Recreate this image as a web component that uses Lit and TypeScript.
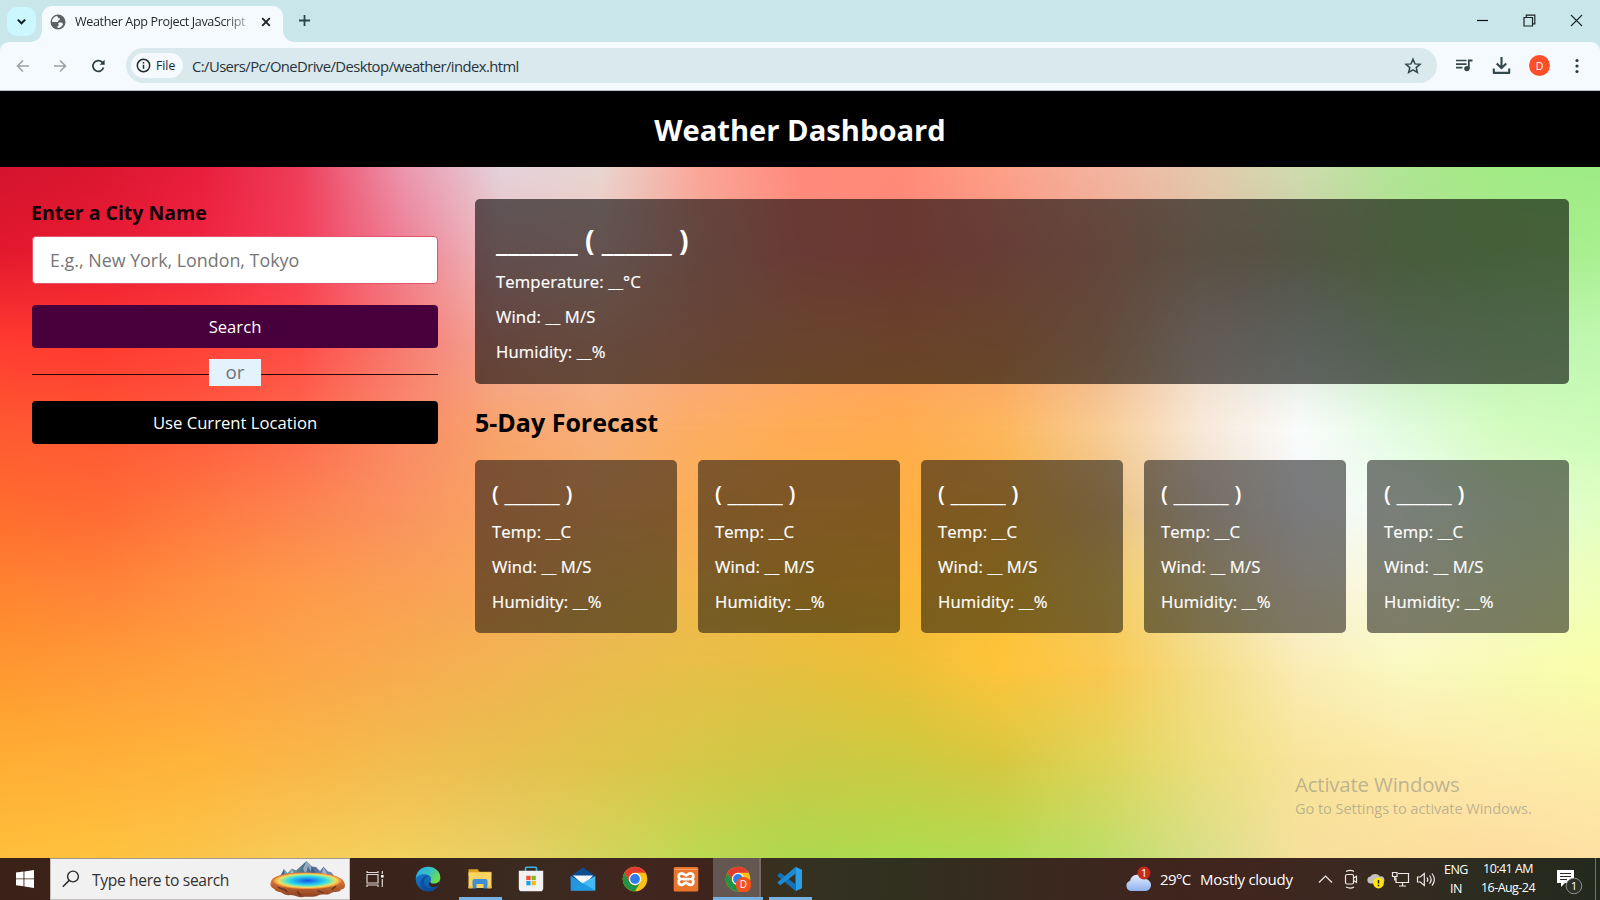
import { LitElement, html, css, svg } from "lit";
import { customElement } from "lit/decorators.js";
import { styleMap } from "lit/directives/style-map.js";

/* Colour mesh of the page background: each row lists evenly spaced colours, y is in percent. */
const MESH: { y: number; colors: string }[] = [
  { y: 0, colors: "d4142e dc1730 e81e3c ee3e5a ec94ac e4d2dc e8d6d0 fca698 ff8a7c ff8a78 fda088 f4b4a0 e6c8ac cfdcae b0e694 a2ec84 9eec84" },
  { y: 12, colors: "e2182e e81a34 f02440 f43c58 ee7c92 eec0c2 f0c8c0 f0a898 ff8e80 ff8878 fa9684 f0a890 dcc0a4 c8cca4 b0e090 a8e88c a8f090" },
  { y: 25, colors: "ff3a30 ff3830 ff4038 ff4a46 f87872 f2a898 f6b496 faa684 ffa470 ffa066 fca46c f0b48c eedccc dce6dc c4ecbc bef2b2 c0f8b0" },
  { y: 38, colors: "ff5a32 ff5834 ff5c40 fe6a4e fa8a66 f8a46c f8b07a fcae62 ffac54 ffac4e fdb65c f8cc94 f8e8d8 fafcfc e2fce0 d4fcc0 ccfcb8" },
  { y: 49.6, colors: "ff6c2e ff6a34 ff7840 fc8450 fa9260 f8a464 f8ae64 fcae54 ffb048 ffb040 fbb644 ecc078 ecdcc8 f4f4fa f4fff4 e4fcd8 e0ffc4" },
  { y: 61.2, colors: "ff8430 ff8438 ff9040 fe9a4a faa054 f6a85a f0b458 f4b84c f8b83c fcb838 fcc038 f4cc60 f4e0a0 f8f0d8 fafcdc f2fcc8 f0ffb8" },
  { y: 72.8, colors: "ff9830 ff9c38 ffa23e fca648 f8ac4e f2b450 eabc4e e6c048 e6c040 ecc038 fec43a fac850 f4dc84 faecb4 faf8c0 f8fab4 f8ffa8" },
  { y: 85.8, colors: "ffae34 ffb038 ffb43c fab648 f2bc50 e8c050 e0c44c d6c848 ccc844 ccca40 d8c840 dfd458 ecde7c f8e49a fce8a6 fcecac fceea8" },
  { y: 100, colors: "ffbe3c ffc23e fac44a f6cc58 f2d05e e8d064 d4d45c bcd852 aed850 aedc50 b0dc54 bcde68 d8de88 f6e09a fcde9c fedca0 fee0a4" },
];

@customElement("mesh-backdrop")
class MeshBackdrop extends LitElement {
  static styles = css`
    :host { display: block; position: absolute; inset: 0; overflow: hidden; }
    .layer { position: absolute; inset: 0; }
  `;
  render() {
    return MESH.map((row, i) => {
      const mask = i === 0 ? "none"
        : `linear-gradient(to bottom, transparent ${MESH[i - 1].y}%, #000 ${row.y}%)`;
      const bg = `linear-gradient(to right, ${row.colors.split(" ").map((c) => "#" + c).join(", ")})`;
      return html`<div class="layer" style=${styleMap({ backgroundImage: bg, maskImage: mask })}></div>`;
    });
  }
}

@customElement("browser-chrome")
class BrowserChrome extends LitElement {
  static styles = css`
    :host { display: block; height: 91px; background: #c9e7eb; font-family: "Open Sans", sans-serif; color: #1f2426; }
    * { box-sizing: border-box; }
    svg { display: block; flex: none; }
    .strip { height: 42px; display: flex; align-items: flex-start; }
    .chev { width: 29px; height: 29px; margin: 7px 6px 0 7px; border-radius: 10px; background: #cbf8ff; display: grid; place-items: center; }
    .tab { width: 241px; height: 36px; margin-top: 6px; background: #f4fafd; border-radius: 10px 10px 0 0; display: flex; align-items: center; padding: 0 12px 5px 8px; position: relative; }
    .tab::before, .tab::after { content: ""; position: absolute; bottom: 0; width: 11px; height: 11px; }
    .tab::before { left: -11px; background: radial-gradient(circle at 0 0, transparent 10.5px, #f4fafd 11px); }
    .tab::after { right: -11px; background: radial-gradient(circle at 100% 0, transparent 10.5px, #f4fafd 11px); }
    .title { margin-left: 9px; width: 173px; font-size: 12.6px; letter-spacing: -0.38px; white-space: nowrap; overflow: hidden; padding-bottom: 1px;
      -webkit-mask-image: linear-gradient(to right, #000 148px, rgba(0,0,0,.3) 172px); }
    .x { margin-left: auto; }
    .plus { margin: 14px 0 0 15px; }
    .win { margin-left: auto; display: flex; gap: 34px; padding: 14px 17px 0 0; }
    .bar { height: 49px; background: #f4fafd; border-radius: 9px 9px 0 0; border-bottom: 1px solid #b4c3c8; display: flex; align-items: center; padding: 0 15px 1px 15px; }
    .back { margin-right: 21px; } .fwd { margin-right: 21px; } .reload { margin-right: 17px; }
    .omni { width: 1311px; height: 35px; border-radius: 18px; background: #d9e9ee; display: flex; align-items: center; padding: 0 15px 0 5px; }
    .chip { height: 25px; width: 52px; border-radius: 13px; background: #f4fafd; display: flex; align-items: center; padding-left: 5px; gap: 5px; font-size: 12.2px; font-weight: 500; }
    .url { margin-left: 9px; font-size: 14.8px; letter-spacing: -0.57px; white-space: nowrap; color: #28333a; }
    .star { margin-left: auto; }
    .music { margin-left: 18px; } .dl { margin-left: 18px; }
    .avatar { margin-left: 18px; width: 21px; height: 21px; border-radius: 50%; background: #ff4f28; color: #fff; display: grid; place-items: center; font-size: 10.5px; }
    .dots { margin-left: 24px; }
  `;
  render() {
    return html`
      <div class="strip">
        <div class="chev"><svg width="11" height="8" viewBox="0 0 11 8"><path d="M1.8 1.6 5.5 5.3 9.2 1.6" fill="none" stroke="#0c2024" stroke-width="2"/></svg></div>
        <div class="tab">
          <svg width="16" height="16" viewBox="0 0 16 16"><circle cx="8" cy="8" r="7.5" fill="#5b6266"/>
            <path d="M2 7.8C2 5 4 2.4 7 2c1 .6.4 1.500 1.300 2 .9.4 1.700-.2 1.700.9 0 1.100-1.800 1-1.800 2 0 .8-.8 1.200-2 1.200-1.600 0-1.700.2-3 0zM8.600 8.800c1.500-.4 3.600-.2 4.400 1.200.3.8-1.800 3-3.600 3.900-.8.300-2.200.1-2.200-.6 0-1.500 1.500-1.300 1.500-2.500 0-.9-.8-1.600-.1-2z" fill="#f4fafd"/></svg>
          <span class="title">Weather App Project JavaScript</span>
          <svg class="x" width="10" height="10" viewBox="0 0 10 10"><path d="M1.200 1.200 8.800 8.800M8.800 1.200 1.200 8.800" stroke="#1f2426" stroke-width="1.900"/></svg>
        </div>
        <svg class="plus" width="13" height="13" viewBox="0 0 13 13"><path d="M6.500 1v11M1 6.500h11" stroke="#28464c" stroke-width="1.800"/></svg>
        <div class="win">
          <svg width="13" height="13" viewBox="0 0 13 13"><path d="M1 6.500h11" stroke="#111" stroke-width="1.200"/></svg>
          <svg width="13" height="13" viewBox="0 0 13 13"><path d="M1 3.500h8.500V12H1zM3.300 3.300V1.200h8.500v8.600H9.600" fill="none" stroke="#1b2426" stroke-width="1.200"/></svg>
          <svg width="13" height="13" viewBox="0 0 13 13"><path d="M1 1l11 11M12 1 1 12" stroke="#1b2426" stroke-width="1.100"/></svg>
        </div>
      </div>
      <div class="bar">
        <svg class="back" width="16" height="16" viewBox="0 0 16 16"><path d="M14 8H3M8 2.500 2.500 8 8 13.500" fill="none" stroke="#9aa3a7" stroke-width="1.600"/></svg>
        <svg class="fwd" width="16" height="16" viewBox="0 0 16 16"><path d="M2 8h11M8 2.500 13.500 8 8 13.500" fill="none" stroke="#9aa3a7" stroke-width="1.600"/></svg>
        <svg class="reload" width="20" height="16" viewBox="0 0 20 16"><path d="M14.500 9.600A5.400 5.400 0 1 1 13.200 4.200L14.700 5.600" fill="none" stroke="#2b3c41" stroke-width="1.700"/><path d="M15.600 1.800v5h-5z" fill="#2b3c41"/></svg>
        <div class="omni">
          <div class="chip">
            <svg width="15" height="15" viewBox="0 0 15 15"><circle cx="7.500" cy="7.500" r="6.200" fill="none" stroke="#23292c" stroke-width="1.500"/><path d="M7.500 6.700v4M7.500 4v1.500" stroke="#23292c" stroke-width="1.500"/></svg>
            <span>File</span>
          </div>
          <span class="url">C:/Users/Pc/OneDrive/Desktop/weather/index.html</span>
          <svg class="star" width="18" height="18" viewBox="0 0 18 18"><path d="M9 2.200 11 6.900 16 7.300 12.200 10.600 13.400 15.500 9 12.900 4.600 15.500 5.800 10.600 2 7.300 7 6.900z" fill="none" stroke="#33474d" stroke-width="1.500"/></svg>
        </div>
        <svg class="music" width="19" height="16" viewBox="0 0 19 16"><path d="M1 2.500h10.500M1 6.100h10.500M1 9.700h6.500" stroke="#33474d" stroke-width="1.700"/><path d="M13.800 10.500V2.500h3.700" fill="none" stroke="#33474d" stroke-width="1.800"/><circle cx="11.900" cy="10.600" r="2.700" fill="#33474d"/></svg>
        <svg class="dl" width="19" height="18" viewBox="0 0 19 18"><path d="M9.500 0v10.500M4.700 6.500l4.800 4.600 4.800-4.600" fill="none" stroke="#33474d" stroke-width="2.100"/><path d="M1.800 11.500v4.400h15.400v-4.400" fill="none" stroke="#33474d" stroke-width="2.100" stroke-linejoin="round"/></svg>
        <span class="avatar">D</span>
        <svg class="dots" width="6" height="16" viewBox="0 0 6 16"><g fill="#2b3c41"><circle cx="3" cy="2.500" r="1.600"/><circle cx="3" cy="8" r="1.600"/><circle cx="3" cy="13.500" r="1.600"/></g></svg>
      </div>`;
  }
}

@customElement("weather-dashboard")
class WeatherDashboard extends LitElement {
  static styles = css`
    :host { display: flex; flex-direction: column; position: relative; overflow: hidden; font-family: "Open Sans", sans-serif; }
    * { box-sizing: border-box; margin: 0; }
    .head { height: 76px; background: #000; color: #fff; text-align: center; font-size: 29.17px; font-weight: 700; line-height: 78px; position: relative; }
    .body { flex: 1; position: relative; }
    .cols { position: relative; display: flex; gap: 37px; padding: 32px 31px 0 32px; }
    .form { width: 406px; flex: none; }
    .label { font-size: 19.5px; font-weight: 700; line-height: 27px; color: #12020a; margin-left: -1px; }
    .city { display: block; width: 406px; height: 48px; margin: 10px 0 21px; padding: 0 17px; border: 1px solid #e2556a; border-radius: 4px; background: #fff; font: 400 17.85px "Open Sans", sans-serif; outline: none; }
    .city::placeholder { color: #757575; opacity: 1; }
    .btn { display: block; width: 100%; height: 43px; border: 0; border-radius: 4px; color: #fff; font: 400 16.67px "Open Sans", sans-serif; padding: 0; }
    .search { background: #48003c; }
    .loc { background: #000; }
    .sep { height: 53px; display: flex; align-items: center; padding-bottom: 3px; }
    .sep::before, .sep::after { content: ""; flex: 1; height: 1px; background: #2a0608; margin-top: 3px; }
    .or { width: 52px; height: 27px; background: #e3f2fd; color: #6c757d; text-align: center; font-size: 18.8px; line-height: 27px; margin-top: -1px; }
    .data { flex: 1; }
    .now { height: 185px; border-radius: 5px; background: rgba(0,0,0,.59); color: #fff; padding: 21px; }
    .nowTitle { font-size: 28.33px; font-weight: 700; line-height: 40px; white-space: pre; }
    .row { font-size: 16.67px; font-weight: 500; letter-spacing: .13px; line-height: 23px; margin-top: 12px; white-space: pre; -webkit-text-stroke: .2px #fff; }
    .nowTitle + .row { margin-top: 10px; }
    .sub { font-size: 25px; font-weight: 700; line-height: 36px; color: #000; margin: 20px 0; }
    .cards { display: grid; grid-template-columns: repeat(5, 1fr); gap: 21px; }
    .card { height: 172.500px; border-radius: 5px; background: rgba(0,0,0,.5); color: #fff; padding: 18px 17px; }
    .cardTitle { font-size: 21.700px; font-weight: 600; line-height: 32px; white-space: pre; }
    .cardTitle + .row { margin-top: 10px; }
    .mark { position: absolute; right: 68px; bottom: 39px; width: 237px; color: rgba(130,130,125,.52); white-space: nowrap; }
    .mark1 { font-size: 20.400px; line-height: 28px; letter-spacing: -.18px; }
    .mark2 { font-size: 14.600px; line-height: 21px; letter-spacing: -.07px; }
  `;
  render() {
    return html`
      <h1 class="head">Weather Dashboard</h1>
      <div class="body">
        <mesh-backdrop></mesh-backdrop>
        <div class="cols">
          <div class="form">
            <h3 class="label">Enter a City Name</h3>
            <input class="city" placeholder="E.g., New York, London, Tokyo" />
            <button class="btn search">Search</button>
            <div class="sep"><span class="or">or</span></div>
            <button class="btn loc">Use Current Location</button>
          </div>
          <div class="data">
            <div class="now">
              <h2 class="nowTitle">_______ ( ______ )</h2>
              <div class="row">Temperature: __°C</div>
              <div class="row">Wind: __ M/S</div>
              <div class="row">Humidity: __%</div>
            </div>
            <h2 class="sub">5-Day Forecast</h2>
            <div class="cards">
              ${[1, 2, 3, 4, 5].map(() => html`
                <div class="card">
                  <h3 class="cardTitle">( ______ )</h3>
                  <div class="row">Temp: __C</div>
                  <div class="row">Wind: __ M/S</div>
                  <div class="row">Humidity: __%</div>
                </div>`)}
            </div>
          </div>
        </div>
        <div class="mark">
          <div class="mark1">Activate Windows</div>
          <div class="mark2">Go to Settings to activate Windows.</div>
        </div>
      </div>`;
  }
}

const chromeLogo = svg`
  <circle cx="13" cy="13" r="12.300" fill="#fbc116"/>
  <path d="M2.350 6.850A12.300 12.300 0 0 1 23.650 6.850H13A6.150 6.150 0 0 0 7.670 16.070z" fill="#e33b2e"/>
  <path d="M2.350 6.850A12.300 12.300 0 0 0 13 25.300L18.330 16.070A6.150 6.150 0 0 1 7.670 16.070z" fill="#229342"/>
  <circle cx="13" cy="13" r="6.150" fill="#fff"/><circle cx="13" cy="13" r="4.900" fill="#2f7de9"/>`;

const APPS = [
  { name: "edge", open: false, active: false, art: svg`
    <defs><linearGradient id="ea" x1="0" y1="0" x2="1" y2=".5"><stop offset="0" stop-color="#2aa9e0"/><stop offset=".55" stop-color="#35c1c9"/><stop offset="1" stop-color="#6fdc4c"/></linearGradient>
    <linearGradient id="eb" x1="0" y1="0" x2=".3" y2="1"><stop offset="0" stop-color="#1a8ad6"/><stop offset="1" stop-color="#0f56a8"/></linearGradient></defs>
    <circle cx="13" cy="13" r="12.300" fill="url(#eb)"/>
    <path d="M.8 12C2 4.500 7.500.7 13.200.7c7 0 12.100 5 12.100 10.700 0 4-3 6.400-6.300 6.400-2.700 0-4.300-1.200-3.600-2.300 1-1.500.9-3.300-.2-4.900C12.500 7 4.500 6.800.8 12z" fill="url(#ea)"/>
    <path d="M15.100 10.500c-3.500-.4-6.300 2.300-6 5.800.4 5 5.600 8.500 14.400 3.300 1.400-.8-3 6.300-10 5.800C7 24.800 3.500 18.500 6.300 13.500c2-3.400 6.300-4.700 8.800-3z" fill="#0c4a96" opacity=".75"/>
    <path d="M15.300 15.400c-.7 1.200.9 2.400 3.600 2.400 2 0 3.900-.8 5-2.200l.4 2.400c-2 3-4.800 3.700-7.500 3-4-1-3-5-1.500-5.600z" fill="#3a2219"/>` },
  { name: "explorer", open: true, active: false, art: svg`
    <path d="M1.500 3.200h9.300l1.500 2.500h12v4H1.500z" fill="#e0a21a"/><path d="M1.500 6.300h23V22h-23z" fill="#fbd463"/>
    <path d="M5.500 22.500V15c0-1.300.8-2 2-2h11c1.200 0 2 .7 2 2v7.500h-4V18h-7v4.500z" fill="#3f8fd2"/><path d="M1.500 20h4v2.500h-4zM20.500 20h4v2.500h-4z" fill="#f3c248"/>` },
  { name: "store", open: false, active: false, art: svg`
    <path d="M7.500 5.500V2.200c0-.6.400-1 1-1h9c.6 0 1 .4 1 1v3.300" fill="none" stroke="#36b4e8" stroke-width="1.600"/>
    <path d="M.8 4.700h24.400v17.500c0 2-1 3.100-3 3.100H3.800c-2 0-3-1.100-3-3.100z" fill="#f2f2f4"/>
    <path d="M8.300 9.800h4.300v4.300H8.300z" fill="#f1502f"/><path d="M13.500 9.800h4.300v4.300h-4.300z" fill="#80bb1a"/><path d="M8.300 15h4.300v4.300H8.300z" fill="#1aa3e8"/><path d="M13.500 15h4.300v4.300h-4.300z" fill="#fdb811"/>` },
  { name: "mail", open: false, active: false, art: svg`
    <path d="M.7 10 13 1.500 25.300 10v13.500H.7z" fill="#0e4c92"/><path d="M3 9.500h20l-9 10z" fill="#f4f7fa"/>
    <path d="M.7 10 13 17.500.7 24.500z" fill="#2494dc"/><path d="M25.300 10v14.500H.7L17 14.500z" fill="#45baf2"/><path d="M.7 24.500 13 17l12.300 7.500z" fill="#1f9be4"/>` },
  { name: "chrome", open: false, active: false, art: chromeLogo },
  { name: "xampp", open: false, active: false, art: svg`
    <rect x=".7" y=".9" width="24.600" height="24.600" rx="1.500" fill="#e9742b"/><path d="M1.500 3.500h23" stroke="#f5a36c" stroke-width="1"/>
    <path d="M8.300 7.300a3 3 0 0 0-.7 5.800 3 3 0 0 0 .7 5.800c2.400.2 2.700-2 4.700-2s2.300 2.200 4.700 2a3 3 0 0 0 .7-5.800 3 3 0 0 0-.7-5.800c-2.400-.2-2.700 2-4.700 2s-2.300-2.200-4.700-2zM9.800 13.100h6.400" fill="none" stroke="#fff" stroke-width="2.700" stroke-linecap="round"/>` },
  { name: "chrome-profile", open: true, active: true, art: svg`${chromeLogo}
    <circle cx="18.500" cy="18.700" r="7.800" fill="#f4511e"/><text class="badgeText" x="18.500" y="22.300" text-anchor="middle">D</text>` },
  { name: "vscode", open: true, active: false, art: svg`
    <path d="M18.500.8 25 3.800v18.500l-6.500 3z" fill="#2ba0ea"/><path d="M.8 8.700 3.300 6.800 18.800 18.500v6.800L.8 10.300z" fill="#1173bb"/><path d="M.8 17.300l2.500 2L18.800 7.500V.8L.8 16z" fill="#1e8ad4"/>` },
];

@customElement("task-bar")
class TaskBar extends LitElement {
  static styles = css`
    :host { display: flex; height: 42px; position: relative; color: #fff; font-family: "Open Sans", sans-serif;
      background: linear-gradient(to right, #3a2219 0, #3a231a 400px, #3a2a20 520px, #40261e 640px, #3e241c 700px, #38301f 780px, #333122 830px, #30301f 900px, #3a281f 1040px, #40241e 1200px, #3c2820 1330px, #2c2c20 1470px, #23281d 1600px); }
    * { box-sizing: border-box; }
    svg { display: block; flex: none; }
    .start { width: 50px; display: grid; place-items: center; }
    .search { width: 300px; background: #f1f1f1; border: 1px solid #c4c0bd; border-top-color: #a79a8a; display: flex; align-items: center; color: #32302f; }
    .search .glass { margin: 0 0 1px 11px; }
    .hint { margin-left: 12px; font-size: 15.600px; letter-spacing: -.34px; width: 178px; white-space: nowrap; padding-top: 1px; }
    .task { width: 52px; padding-left: 16px; display: flex; align-items: center; }
    .app { width: 51.700px; position: relative; display: grid; place-items: center; }
    .active::before { content: ""; position: absolute; left: 1px; width: 48px; top: 0; bottom: 0; background: linear-gradient(to right, #645650 46px, #776a64 46px); }
    .open::after { content: ""; position: absolute; left: 5px; width: 43px; bottom: 0; height: 3px; background: #76b3e4; }
    .active::after { left: 1px; width: 50px; }
    .art { position: relative; }
    .badgeText { fill: #fff; font: 10px "Open Sans", sans-serif; }
    .weather { margin-left: auto; display: flex; align-items: center; width: 192px; white-space: nowrap; font-size: 15px; letter-spacing: -.26px; }
    .deg { margin-left: 8px; width: 40px; letter-spacing: -.6px; }
    .tray { display: flex; align-items: center; width: 126px; margin-right: -1px; }
    .two { display: flex; flex-direction: column; align-items: center; justify-content: center; font-size: 12.500px; line-height: 18.800px; letter-spacing: -.55px; white-space: nowrap; }
    .lang { width: 28px; padding-top: 1px; } .clock { width: 76px; margin-right: 11px; }
    .note { width: 43px; display: flex; align-items: center; padding-top: 4px; }
    .n { fill: #fff; font: 11.500px "Open Sans", sans-serif; }
    .peek { position: absolute; right: 4px; top: 0; bottom: 0; width: 1px; background: #70746a; }
  `;
  render() {
    return html`
      <div class="start"><svg width="18" height="18" viewBox="0 0 18 18"><path d="M0 2.600 7.500 1.600v6.900H0zM8.400 1.400 18 0v8.500H8.400zM0 9.300h7.500v6.900L0 15.200zM8.400 9.300H18V18l-9.600-1.400z" fill="#fff"/></svg></div>
      <div class="search">
        <svg class="glass" width="18" height="18" viewBox="0 0 18 18"><circle cx="11" cy="6.500" r="5.400" fill="none" stroke="#2b2b2b" stroke-width="1.400"/><path d="M7.200 10.400.8 16.800" stroke="#2b2b2b" stroke-width="1.500"/></svg>
        <span class="hint">Type here to search</span>
        <svg width="76" height="40" viewBox="0 0 76 40">
          <defs>
            <radialGradient id="pool" cx=".5" cy=".48" r=".5"><stop offset="0" stop-color="#1a4fdc"/><stop offset=".25" stop-color="#1e90ee"/><stop offset=".52" stop-color="#28d4ea"/><stop offset=".7" stop-color="#7fe6b0"/><stop offset=".84" stop-color="#f2dc60"/><stop offset="1" stop-color="#f08a34"/></radialGradient>
            <linearGradient id="peak" x1="0" y1="0" x2="1" y2="0"><stop offset="0" stop-color="#7fb0a4"/><stop offset=".5" stop-color="#4a6a8c"/><stop offset="1" stop-color="#7c8cc0"/></linearGradient>
            <linearGradient id="rock" x1="0" y1="0" x2="0" y2="1"><stop offset=".3" stop-color="#d9763a"/><stop offset="1" stop-color="#8c4222"/></linearGradient>
          </defs>
          <path d="M9 19 14 10 17.500 14 22 9.500 26 11.500 31 7 36.500 2 42 7.500 46 8 50 12 53.500 7.500 58 12.500 61 13 66 19z" fill="url(#peak)"/>
          <path d="M36.500 2 33 10l3 5 2-8 4 8-1-8zM22 10l-3 7h6zM53.500 8l-2 8h6z" fill="#dfe8e8" opacity=".5"/>
          <path d="M14 10l-4 8h5zM42 8l-3 9h8z" fill="#3c5590" opacity=".8"/>
          <path d="M1 23C2 16 18 13.500 37 13.500S72 17 74 23C76 27 75 30 71 30.500 70 34 65 32 61 34 58 37 52 34 48 36.500 43 39 37 37 33 38 28 39 25 36 20 36 15 37 13 34 10 33 6 33 5 30 2.500 29 0 27 0 25 1 23z" fill="url(#rock)"/>
          <ellipse cx="37.300" cy="22" rx="34" ry="8" fill="url(#pool)"/>
          <path d="M8 28c3 3 8 1 9 5M27 32c2 2 1 3 4 4M48 31c1 3 4 1 5 3M66 27c-1 2-4 2-4 4" fill="none" stroke="#6f3219" stroke-width="1.400"/>
        </svg>
      </div>
      <div class="task"><svg width="18" height="18" viewBox="0 0 18 18"><path d="M1 4.500h11v8.500H1zM1 1v1.500h11V1M1 17v-2h11v2" fill="none" stroke="#ddd6d2" stroke-width="1.200"/><path d="M16.300 1v3M16.300 9v8" stroke="#ddd6d2" stroke-width="1.200"/><path d="M15 5h2.600v2.600H15z" fill="#fff"/></svg></div>
      ${APPS.map((a) => html`<div class="app ${a.open ? "open" : ""} ${a.active ? "active" : ""}"><svg class="art" width="26" height="26" viewBox="0 0 26 26">${a.art}</svg></div>`)}
      <div class="weather">
        <svg width="27" height="26" viewBox="0 0 27 26">
          <defs><linearGradient id="cl" x1="0" y1="0" x2="0" y2="1"><stop offset="0" stop-color="#e4ecfb"/><stop offset="1" stop-color="#8fb2ef"/></linearGradient></defs>
          <path d="M6.500 25A5.300 5.300 0 0 1 5 14.700 7.800 7.800 0 0 1 19.500 13 6 6 0 0 1 20.500 25z" fill="url(#cl)"/>
          <circle cx="19" cy="7" r="6.500" fill="#c42b1c"/><text class="n" x="19" y="11" text-anchor="middle" font-size="10">1</text>
        </svg>
        <span class="deg">29°C</span><span>Mostly cloudy</span>
      </div>
      <div class="tray">
        <svg width="126" height="22" viewBox="0 0 126 22" fill="none" stroke="#efeae7" stroke-width="1.200">
          <path d="M2 14.500 8.500 8l6.500 6.500"/>
          <rect x="28.500" y="6.500" width="8" height="9.500" rx="1.500"/><path d="M36.500 10l3-1.800v6.200l-3-1.800M29 3.500c3-1.500 5.500-1.500 8 0M29 19c3 1.500 5.500 1.500 8 0"/>
          <g stroke="none"><path d="M53 15.500a3.600 3.600 0 0 1 .3-7 6 6 0 0 1 9.700 0 3.500 3.500 0 0 1 1.500 7z" fill="#c5c1bd"/><circle cx="61.500" cy="15" r="5.400" fill="#ffe70a"/></g>
          <path d="M61.500 12v3.600M61.500 16.800v1.400" stroke="#222" stroke-width="1.500"/>
          <path d="M81 5.500h10.500v9H79V9.500M85.500 14.500v3.500M82 18h7M75.500 4.500h4.500v4h-4.500zM77.700 8.500v4"/>
          <path d="M100.500 9h2.800l4-3.500v12l-4-3.500h-2.800zM110 9.500c1 1.300 1 3 0 4.200M112.500 7.500c2 2.500 2 5.700 0 8.200M115 5.500c3 4 3 8.300 0 12.200"/>
        </svg>
      </div>
      <div class="two lang"><span>ENG</span><span>IN</span></div>
      <div class="two clock"><span>10:41 AM</span><span>16-Aug-24</span></div>
      <div class="note"><svg width="26" height="27" viewBox="0 0 26 27"><path d="M0 2h17v13H8l-4 4v-4H0z" fill="#fff"/><path d="M3 5.500h11M3 8.500h11M3 11.500h7" stroke="#2b2c22" stroke-width="1.100"/><circle cx="17" cy="18" r="7.800" fill="#2c2f2a" stroke="#8b8e88" stroke-width="1"/><text class="n" x="17" y="22.200" text-anchor="middle">1</text></svg></div>
      <div class="peek"></div>`;
  }
}

@customElement("app-root")
class AppRoot extends LitElement {
  static styles = css`
    :host { display: grid; grid-template-rows: 91px 1fr 42px; width: 1600px; height: 900px; overflow: hidden; }
  `;
  render() {
    return html`<browser-chrome></browser-chrome><weather-dashboard></weather-dashboard><task-bar></task-bar>`;
  }
}
